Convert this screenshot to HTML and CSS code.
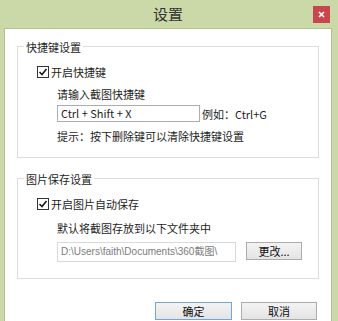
FILE: index.html
```html
<!DOCTYPE html>
<html lang="zh-CN">
<head>
    <meta charset="UTF-8">
    <title>设置</title>
    <link rel="stylesheet" href="styles.css">
</head>
<body>
    <div class="window">
        <div class="titlebar">
            <span class="title">设置</span>
            <span class="close">
                <svg width="7" height="7" viewBox="0 0 7 7"><path d="M1 1L6 6M6 1L1 6" stroke="#fff" stroke-width="1.6"/></svg>
            </span>
        </div>

        <div class="client">
            <section class="group">
                <div class="group-title">快捷键设置</div>
                <div class="check-row">
                    <svg class="check" width="12" height="12" viewBox="0 0 12 12"><rect x="0.5" y="0.5" width="11" height="11" fill="#fff" stroke="#333"/><path d="M2.5 6L5 8.5L9.5 3" fill="none" stroke="#1a1a1a" stroke-width="1.6"/></svg>
                    <span>开启快捷键</span>
                </div>
                <div class="sub text-row">请输入截图快捷键</div>
                <div class="sub field-row">
                    <div class="field">Ctrl + Shift + X</div>
                    <span>例如：Ctrl+G</span>
                </div>
                <div class="sub text-row hint">提示：按下删除键可以清除快捷键设置</div>
            </section>

            <section class="group group-save">
                <div class="group-title">图片保存设置</div>
                <div class="check-row">
                    <svg class="check" width="12" height="12" viewBox="0 0 12 12"><rect x="0.5" y="0.5" width="11" height="11" fill="#fff" stroke="#333"/><path d="M2.5 6L5 8.5L9.5 3" fill="none" stroke="#1a1a1a" stroke-width="1.6"/></svg>
                    <span>开启图片自动保存</span>
                </div>
                <div class="sub text-row save-note">默认将截图存放到以下文件夹中</div>
                <div class="sub path-row">
                    <div class="field field-path">D:\Users\faith\Documents\360截图\</div>
                    <button class="btn btn-browse">更改...</button>
                </div>
            </section>

            <div class="actions">
                <button class="btn btn-default">确定</button>
                <button class="btn btn-cancel">取消</button>
            </div>
        </div>
    </div>
</body>
</html>
```

FILE: styles.css
```css
body {
    margin: 0;
    font-family: "Noto Sans CJK SC", "Microsoft YaHei", sans-serif;
    font-size: 11px;
    color: #1e1e1e;
}

.window {
    height: 321px;
    box-sizing: border-box;
    background: #cbd9a9;
    padding: 0 6px 0 4px;
    display: flex;
    flex-direction: column;
    overflow: hidden;
}

.titlebar {
    height: 28px;
    flex: none;
    display: grid;
    grid-template-columns: 1fr auto 1fr;
    align-items: center;
}

.title {
    grid-column: 2;
    font-size: 15px;
    line-height: 18px;
    color: #333;
}

.close {
    grid-column: 3;
    justify-self: end;
    width: 17px;
    height: 17px;
    margin-right: 2px;
    background: #c7474c;
    display: flex;
    align-items: center;
    justify-content: center;
}

.client {
    flex: 1;
    background: #fff;
    border: 1px solid #b3c393;
    border-bottom: 0;
    padding: 0 12px 0 12px;
}

/* group boxes */
.group {
    border: 1px solid #dcdcdc;
    margin-top: 17px;
    padding: 0 0 14px 19px;
}

.group-save {
    margin-top: 20px;
    padding-bottom: 16px;
}

.group-title {
    display: table;
    margin: -7px 0 0 -13px;
    padding: 0 2px;
    background: #fff;
    line-height: 14px;
}

.check-row {
    display: flex;
    align-items: center;
    gap: 2px;
    line-height: 14px;
    margin-top: 11px;
}

.check {
    display: block;
}

.sub {
    margin-left: 20px;
}

.text-row {
    line-height: 14px;
    margin-top: 8px;
}

.hint {
    margin-top: 7px;
}

.save-note {
    margin-top: 10px;
}

.field-row {
    display: flex;
    align-items: center;
    gap: 2px;
    margin-top: 4px;
    line-height: 14px;
}

.field {
    width: 143px;
    height: 17px;
    box-sizing: border-box;
    border: 1px solid #abadb3;
    padding: 0 3px;
    line-height: 15px;
    white-space: nowrap;
    overflow: hidden;
}

.path-row {
    display: flex;
    align-items: flex-start;
    gap: 10px;
    margin-top: 7px;
}

.field-path {
    width: 179px;
    height: 20px;
    line-height: 18px;
    font-family: "Liberation Sans", "Noto Sans CJK SC", sans-serif;
    font-size: 10px;
    border-color: #d9d9d9;
    color: #7c7c7c;
}

/* buttons */
.btn {
    font: inherit;
    color: #111;
    height: 18px;
    padding: 0;
    line-height: 16px;
    border: 1px solid #acacac;
    background: linear-gradient(#f3f3f3, #e4e4e4);
}

.btn-browse {
    width: 56px;
}

.actions {
    display: flex;
    justify-content: flex-end;
    gap: 9px;
    margin: 23px 2px 0 0;
}

.btn-default {
    width: 77px;
    border-color: #6ea7de;
}

.btn-cancel {
    width: 76px;
}
```
